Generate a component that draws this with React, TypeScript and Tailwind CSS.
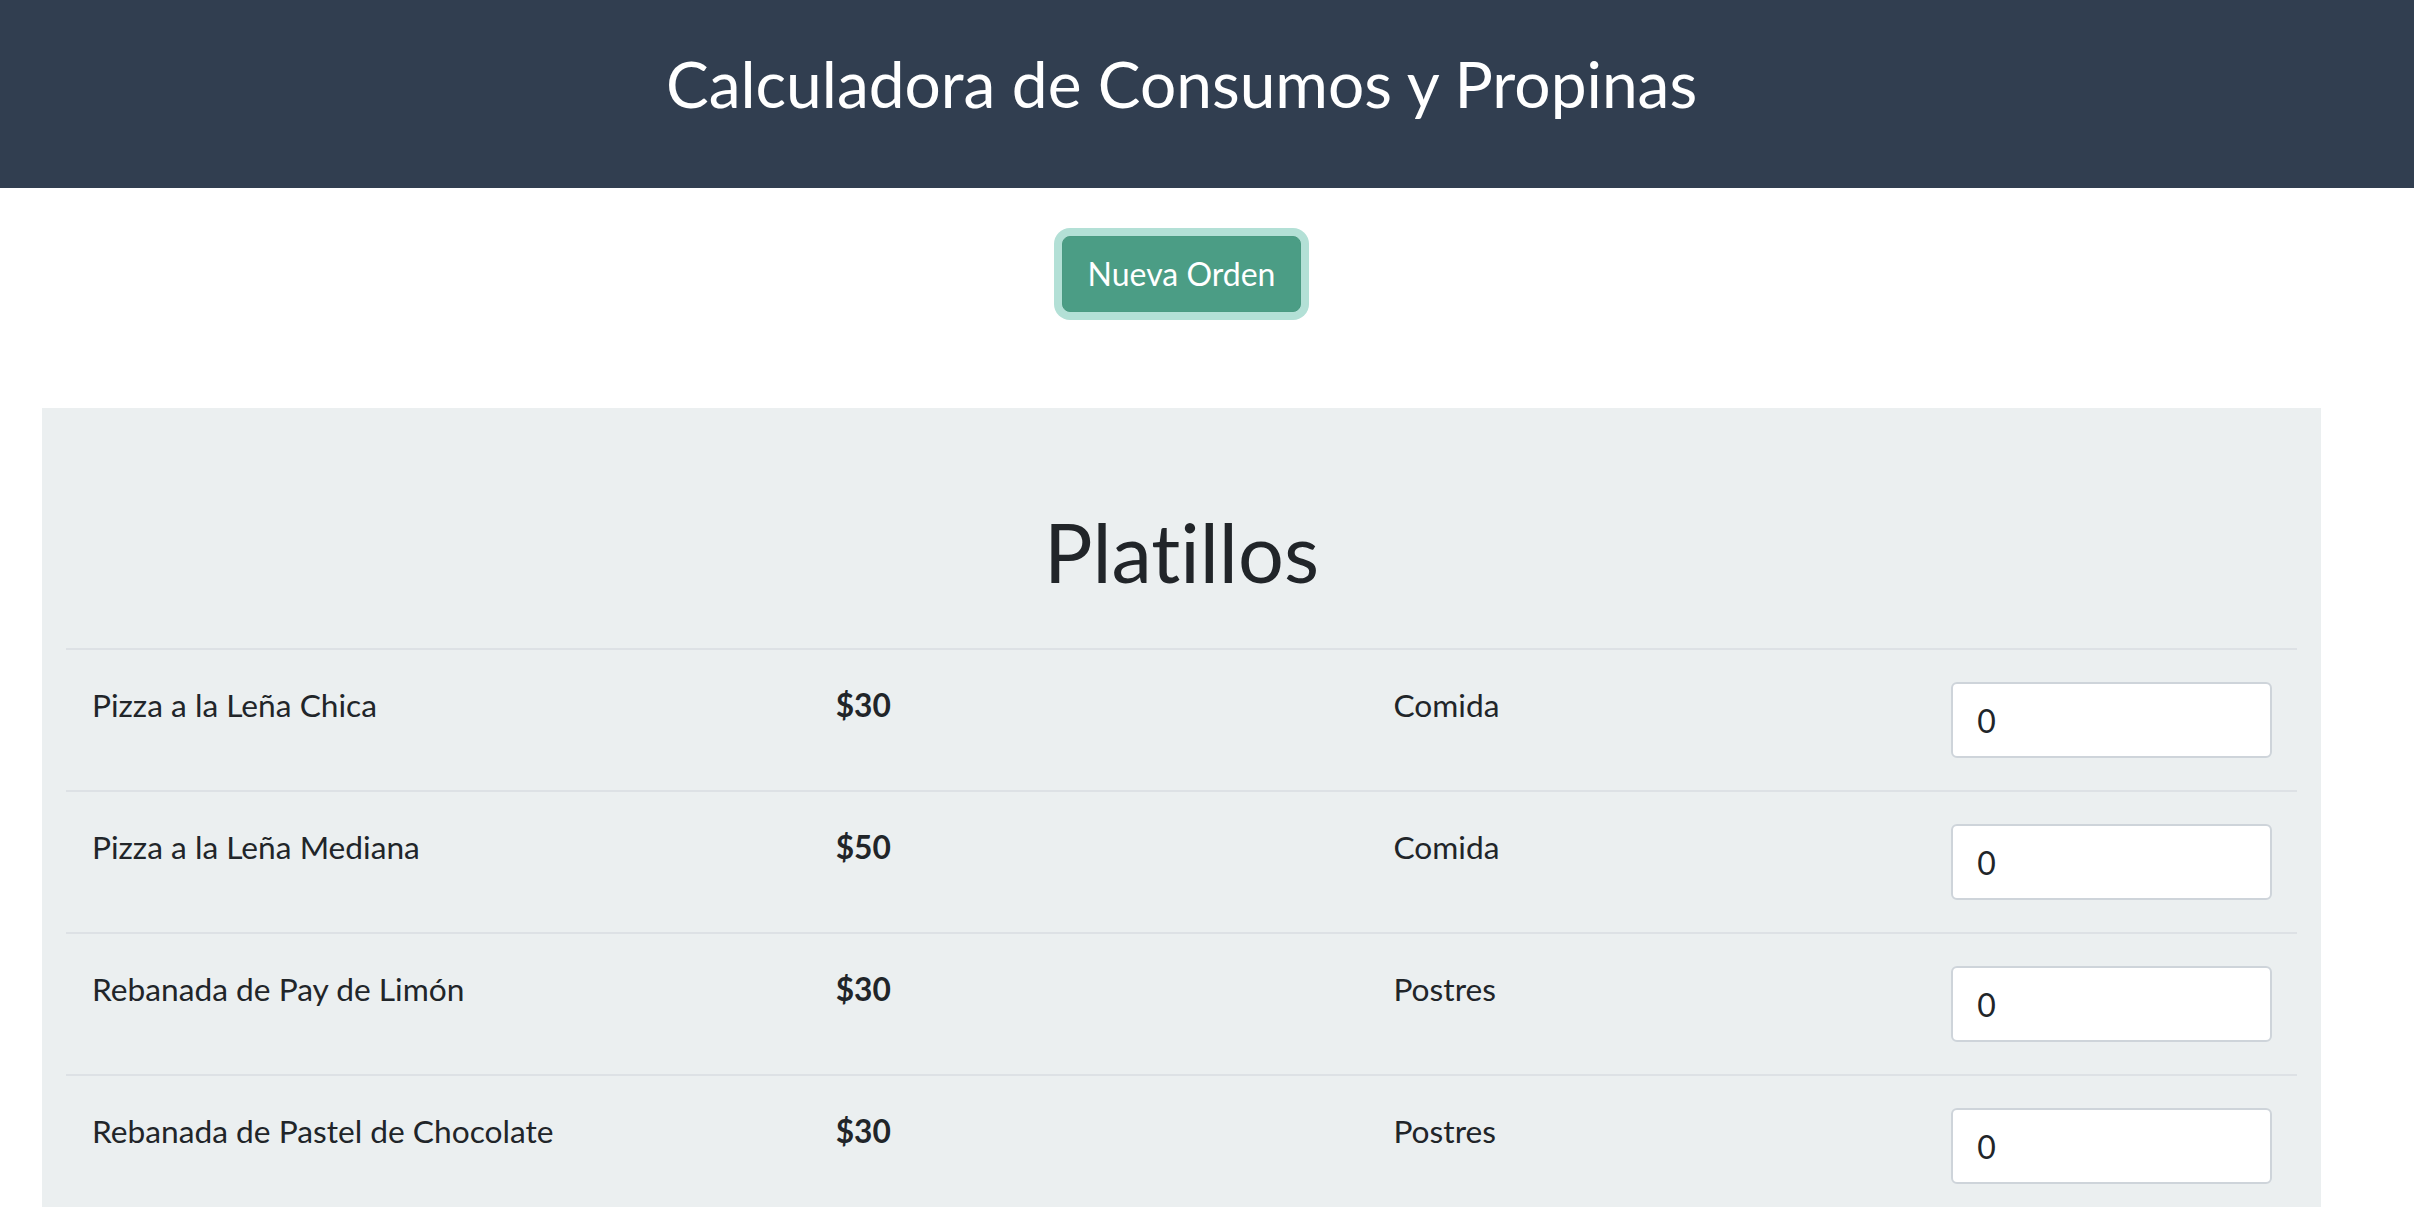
const platillos = [
  { nombre: "Pizza a la Leña Chica", precio: 30, categoria: "Comida" },
  { nombre: "Pizza a la Leña Mediana", precio: 50, categoria: "Comida" },
  { nombre: "Rebanada de Pay de Limón", precio: 30, categoria: "Postres" },
  { nombre: "Rebanada de Pastel de Chocolate", precio: 30, categoria: "Postres" },
];

const Fila = ({ nombre, precio, categoria }: { nombre: string; precio: number; categoria: string }) => {
  return (
    <li className="grid grid-cols-12 items-start border-t-2 border-[#dde1e5] py-[32px]">
      <p className="col-span-4 px-[26px] text-[31.7px] leading-[1.5]">{nombre}</p>
      <p className="col-span-3 px-[26px] text-[31.7px] leading-[1.5] font-bold">${precio}</p>
      <p className="col-span-3 px-[26px] text-[31.7px] leading-[1.5]">{categoria}</p>
      <div className="col-span-2 pl-[26px] pr-[25px]">
        <input
          type="number"
          defaultValue={0}
          className="w-full h-[76px] rounded-[6px] border-2 border-[#ced4da] bg-white px-[24px] text-[32px] text-[#212529] outline-none"
        />
      </div>
    </li>
  );
};

export default function App() {
  return (
    <div
      className="min-h-screen bg-white text-[#212529] [font-variant-ligatures:none]"
      style={{ fontFamily: "Lato, 'Noto Sans', sans-serif" }}
    >
      <header className="bg-[#313e50] h-[188px] pt-[46px]">
        <div className="ml-[42px] w-[2279px]">
          <h1 className="text-center text-white text-[64px] leading-[1.2]">Calculadora de Consumos y Propinas</h1>
        </div>
      </header>

      <div className="ml-[42px] w-[2279px]">
        <div className="flex justify-center pt-[48px]">
          <button className="h-[76px] px-[25px] rounded-[8px] border border-[#4a9a82] bg-[#4b9d85] text-white text-[32px] leading-[1.5] shadow-[0_0_0_8px_#b3e0d6]">
            Nueva Orden
          </button>
        </div>

        <main className="mt-[96px] bg-[#ebeff0] px-[24px] pt-[96px] pb-[60px]">
          <h2 className="text-center text-[81px] leading-[96px] font-normal mb-[48px]">Platillos</h2>
          <ul>
            {platillos.map((p) => (
              <Fila key={p.nombre} {...p} />
            ))}
          </ul>
        </main>
      </div>
    </div>
  );
}
